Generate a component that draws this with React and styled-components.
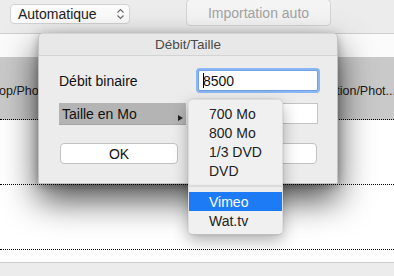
import React from 'react'
import styled, { createGlobalStyle } from 'styled-components'

const GlobalStyle = createGlobalStyle`
  html, body {
    margin: 0;
    padding: 0;
    background: #ffffff;
    font-family: "Liberation Sans", Arial, sans-serif;
  }
`

const menuItems = [
  { label: '700 Mo' },
  { label: '800 Mo' },
  { label: '1/3 DVD' },
  { label: 'DVD' },
  { separator: true },
  { label: 'Vimeo', active: true },
  { label: 'Wat.tv' },
]

const App = () => {
  return (
    <>
      <GlobalStyle />
      <Window>
        <Toolbar>
          <PopUp>
            Automatique
            <svg width="9" height="12" viewBox="0 0 9 12">
              <path d="M1.5 4.5 L4.5 1.5 L7.5 4.5" fill="none" stroke="#6a6a6a" strokeWidth="1.1" />
              <path d="M1.5 7.5 L4.5 10.5 L7.5 7.5" fill="none" stroke="#6a6a6a" strokeWidth="1.1" />
            </svg>
          </PopUp>
          <ToolButton disabled>Importation auto</ToolButton>
        </Toolbar>
        <Strip />
        <HeaderRow>
          <HeaderCell>op/Photos</HeaderCell>
          <HeaderCell $right>Destination/Phot...</HeaderCell>
        </HeaderRow>
        <TableRow />
        <TableRow />
        <Filler />
        <BottomBar />

        <Sheet>
          <SheetTitle>Débit/Taille</SheetTitle>
          <SheetBody>
            <Label>Débit binaire</Label>
            <Field $focused>
              <Caret />8500
            </Field>
            <SizeButton>
              Taille en Mo
              <Arrow />
            </SizeButton>
            <Field />
            <PushButton>OK</PushButton>
            <PushButton />
          </SheetBody>
        </Sheet>

        <Menu>
          {menuItems.map((item, i) =>
            item.separator
              ? <Separator key={i} />
              : <MenuItem key={i} $active={item.active}>{item.label}</MenuItem>
          )}
        </Menu>
      </Window>
    </>
  )
}

const Window = styled.div`
  position: relative;
  width: 394px;
  height: 276px;
  overflow: hidden;
  display: flex;
  flex-direction: column;
  background: #ffffff;
`

const Toolbar = styled.div`
  height: 33px;
  flex-shrink: 0;
  background: #ececec;
  border-bottom: 1px solid #cfcfcf;
  display: flex;
  align-items: flex-start;
  padding-left: 10px;
  box-sizing: content-box;
`

const PopUp = styled.div`
  margin-top: 4px;
  width: 120px;
  height: 20px;
  box-sizing: border-box;
  border: 1px solid #d2d2d2;
  border-radius: 4px;
  background: #fbfbfb;
  display: flex;
  align-items: center;
  justify-content: space-between;
  padding: 0 3px 0 7px;
  font-size: 14px;
  color: #222;

  svg {
    margin-right: 1px;
  }
`

const ToolButton = styled.button`
  margin-left: 56px;
  margin-top: -1px;
  width: 145px;
  height: 27px;
  border: 1px solid #d4d4d4;
  border-radius: 4px;
  background: #f4f4f4;
  font-family: inherit;
  font-size: 14px;
  color: #a3a3a3;
  padding: 0;
`

const Strip = styled.div`
  height: 23px;
  flex-shrink: 0;
  background: #fbfbfb;
`

const HeaderRow = styled.div`
  height: 63px;
  flex-shrink: 0;
  background: #c9c9c9;
  border-bottom: 1px dotted #000;
  display: flex;
  justify-content: space-between;
  align-items: center;
  padding-top: 5px;
  box-sizing: border-box;
  overflow: hidden;
`

const HeaderCell = styled.div`
  font-size: 12.5px;
  color: #1a1a1a;
  white-space: nowrap;
  margin-left: ${p => (p.$right ? '0' : '-1px')};
  margin-right: ${p => (p.$right ? '-2px' : '0')};
  text-align: ${p => (p.$right ? 'right' : 'left')};
`

const TableRow = styled.div`
  height: 64px;
  flex-shrink: 0;
  border-bottom: 1px dotted #000;
`

const Filler = styled.div`
  flex: 1;
`

const BottomBar = styled.div`
  height: 13px;
  flex-shrink: 0;
  background: #ececec;
  border-top: 1px solid #cdcdcd;
`

const Sheet = styled.div`
  position: absolute;
  left: 38px;
  top: 33px;
  width: 300px;
  height: 151px;
  box-sizing: border-box;
  background: #ececec;
  border: 1px solid rgba(0, 0, 0, 0.18);
  border-top-color: rgba(0, 0, 0, 0.1);
  border-radius: 5px 5px 0 0;
  box-shadow: 0 16px 34px rgba(0, 0, 0, 0.7), 0 2px 8px rgba(0, 0, 0, 0.25);
`

const SheetTitle = styled.div`
  height: 21px;
  border-bottom: 1px solid #d3d3d3;
  background: #e8e8e8;
  border-radius: 5px 5px 0 0;
  display: flex;
  align-items: center;
  justify-content: center;
  font-size: 13.5px;
  color: #4a4a4a;
`

const SheetBody = styled.div`
  display: grid;
  grid-template-columns: 127px 120px;
  grid-auto-rows: 21px;
  column-gap: 12px;
  row-gap: 12px;
  padding: 14px 0 0 20px;

  & > :nth-child(5), & > :nth-child(6) {
    margin-top: 7px;
  }
`

const Label = styled.div`
  display: flex;
  align-items: center;
  font-size: 14px;
  color: #111;
`

const Field = styled.div`
  position: relative;
  box-sizing: border-box;
  height: 21px;
  border: 1px solid ${p => (p.$focused ? '#6f9fe6' : '#c4c4c4')};
  background: #fff;
  display: flex;
  align-items: center;
  padding-left: 4px;
  font-size: 14px;
  color: #111;
  box-shadow: ${p => (p.$focused ? '0 0 0 2px #8ab6f4' : 'none')};
  border-radius: ${p => (p.$focused ? '2px' : '0')};
`

const Caret = styled.span`
  width: 1px;
  height: 15px;
  background: #000;
  margin-right: -1px;
`

const SizeButton = styled.div`
  position: relative;
  height: 22px;
  box-sizing: border-box;
  background: #b4b4b4;
  border-bottom: 1px solid #a5a5a5;
  display: flex;
  align-items: center;
  padding-left: 3px;
  font-size: 14px;
  color: #111;
`

const Arrow = styled.span`
  position: absolute;
  right: 3px;
  top: 12px;
  width: 0;
  height: 0;
  border-top: 3px solid transparent;
  border-bottom: 3px solid transparent;
  border-left: 5px solid #222;
`

const PushButton = styled.button`
  box-sizing: border-box;
  width: 118px;
  height: 21px;
  margin-left: 1px;
  border: 1px solid #c2c2c2;
  border-radius: 4px;
  background: #ffffff;
  font-family: inherit;
  font-size: 14px;
  color: #111;
  padding: 0;
`

const Menu = styled.div`
  position: absolute;
  left: 188px;
  top: 99px;
  width: 95px;
  padding: 4px 0;
  border-radius: 5px;
  background: rgba(240, 240, 240, 0.98);
  border: 1px solid rgba(0, 0, 0, 0.08);
  border-bottom-color: rgba(0, 0, 0, 0.2);
  box-sizing: border-box;
  box-shadow: 0 6px 16px rgba(0, 0, 0, 0.3), 0 0 2px rgba(0, 0, 0, 0.15);
`

const MenuItem = styled.div`
  height: 19px;
  display: flex;
  align-items: center;
  padding-left: 20px;
  font-size: 14px;
  color: ${p => (p.$active ? '#ffffff' : '#222')};
  background: ${p => (p.$active ? '#1e7bf6' : 'transparent')};
`

const Separator = styled.div`
  height: 12px;
  display: flex;
  align-items: center;

  &::after {
    content: '';
    flex: 1;
    height: 2px;
    background: #dadada;
  }
`

export default App
